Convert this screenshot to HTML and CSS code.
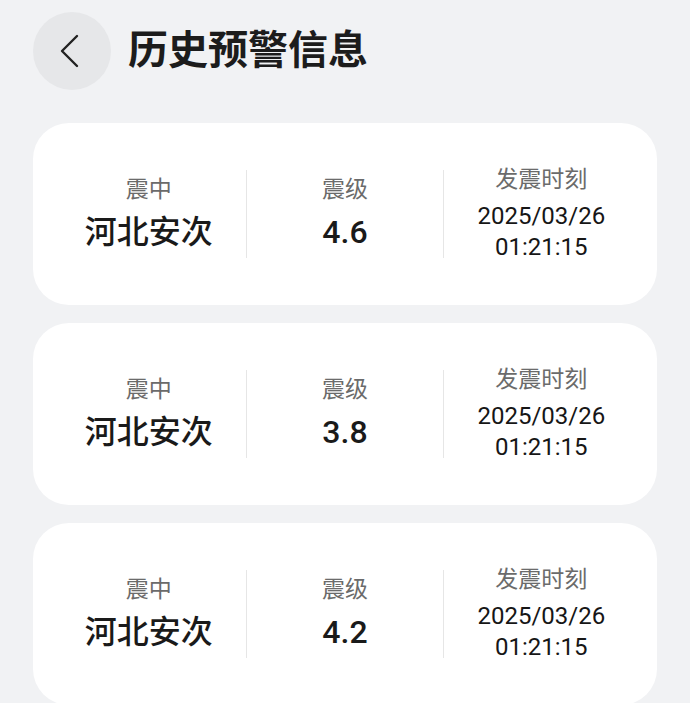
FILE: index.html
```html
<!DOCTYPE html>
<html>
<head>
  <meta charset="utf-8">
  <link rel="stylesheet" href="styles.css">
</head>
<body>

<div class="header">
  <div class="back-btn">
    <svg width="24" height="36" viewBox="0 0 24 36"><path d="M19 3 L4 18 L19 33" fill="none" stroke="#222" stroke-width="2.4" stroke-linecap="round" stroke-linejoin="round"/></svg>
  </div>
  <div class="title">历史预警信息</div>
</div>

<div class="list">
  <div class="card">
    <div class="col">
      <div class="label">震中</div>
      <div class="value">河北安次</div>
    </div>
    <div class="col">
      <div class="label">震级</div>
      <div class="value">4.6</div>
    </div>
    <div class="col">
      <div class="label">发震时刻</div>
      <div class="time">2025/03/26<br>01:21:15</div>
    </div>
  </div>

  <div class="card">
    <div class="col">
      <div class="label">震中</div>
      <div class="value">河北安次</div>
    </div>
    <div class="col">
      <div class="label">震级</div>
      <div class="value">3.8</div>
    </div>
    <div class="col">
      <div class="label">发震时刻</div>
      <div class="time">2025/03/26<br>01:21:15</div>
    </div>
  </div>

  <div class="card">
    <div class="col">
      <div class="label">震中</div>
      <div class="value">河北安次</div>
    </div>
    <div class="col">
      <div class="label">震级</div>
      <div class="value">4.2</div>
    </div>
    <div class="col">
      <div class="label">发震时刻</div>
      <div class="time">2025/03/26<br>01:21:15</div>
    </div>
  </div>
</div>

</body>
</html>
```

FILE: styles.css
```css
body {
  margin: 0;
  background-color: #f1f2f4;
  font-family: Roboto, "Noto Sans CJK SC", sans-serif;
  color: #1a1a1a;
  height: 703px;
  overflow: hidden;
}
.header {
  display: flex;
  align-items: center;
  padding: 12px 0 0 33px;
  height: 78px;
}
.back-btn {
  width: 78px;
  height: 78px;
  border-radius: 50%;
  background-color: #e6e7e9;
  display: flex;
  align-items: center;
  justify-content: center;
}
.back-btn svg {
  margin-left: -4px;
}
.title {
  margin-left: 17px;
  margin-top: -8px;
  font-size: 40px;
  font-weight: 700;
  color: #1c1c1c;
}
.list {
  display: flex;
  flex-direction: column;
  gap: 18px;
  padding: 33px 33px 0 33px;
}
.card {
  background-color: #ffffff;
  border-radius: 36px;
  height: 182px;
  padding: 0 18px;
  display: flex;
  align-items: center;
  flex-shrink: 0;
}
.col {
  width: 196px;
  height: 88px;
  text-align: center;
  display: flex;
  flex-direction: column;
  justify-content: center;
}
.col + .col {
  border-left: 1px solid #e6e6e6;
}
.label {
  font-size: 23px;
  color: #6b6b6b;
  line-height: 30px;
}
.value {
  font-size: 32px;
  font-weight: 500;
  line-height: 42px;
  margin-top: 6px;
}
.time {
  font-size: 24px;
  font-weight: 400;
  line-height: 31px;
  margin-top: 6px;
  color: #161616;
}
```
